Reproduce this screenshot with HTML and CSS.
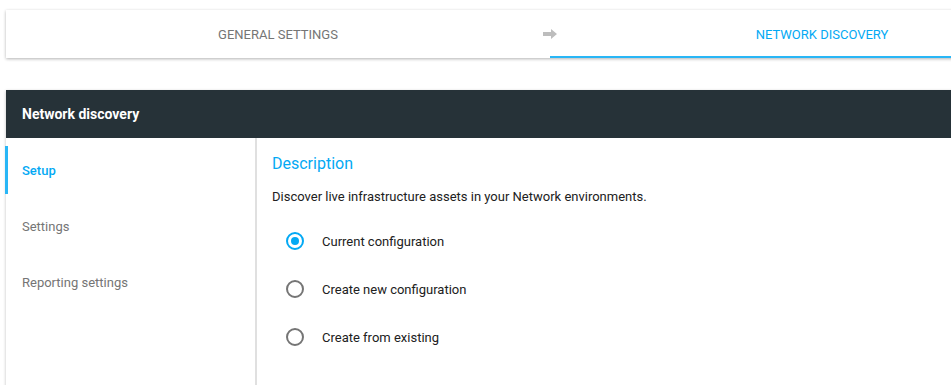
FILE: index.html
```html
<!DOCTYPE html>
<html lang="en">
<head>
    <meta charset="UTF-8">
    <meta name="viewport" content="width=device-width, initial-scale=1.0">
    <title>Network discovery</title>
    <link rel="stylesheet" href="styles.css">
</head>
<body>
    <div class="page">
        <div class="stepper">
            <div class="step">General settings</div>
            <svg class="step-arrow" viewBox="0 0 14 10">
                <path d="M0 3h8V0l6 5-6 5V7H0z"></path>
            </svg>
            <div class="step step-active">Network discovery</div>
        </div>

        <div class="panel">
            <div class="panel-header">Network discovery</div>
            <div class="panel-body">
                <ul class="side-nav">
                    <li class="side-item side-item-active">Setup</li>
                    <li class="side-item">Settings</li>
                    <li class="side-item">Reporting settings</li>
                </ul>
                <div class="content">
                    <h2 class="content-title">Description</h2>
                    <p class="content-text">Discover live infrastructure assets in your Network environments.</p>
                    <div class="radio-group">
                        <label class="radio">
                            <span class="radio-circle radio-checked"></span>
                            Current configuration
                        </label>
                        <label class="radio">
                            <span class="radio-circle"></span>
                            Create new configuration
                        </label>
                        <label class="radio">
                            <span class="radio-circle"></span>
                            Create from existing
                        </label>
                    </div>
                </div>
            </div>
        </div>
    </div>
</body>
</html>
```

FILE: styles.css
```css
body {
    font-family: Roboto, "Liberation Sans", sans-serif;
    background-color: #fff;
    margin: 0px;
    overflow: hidden;
}

.page {
    padding: 10px 0 0 6px;
    width: 1088px;
}

.stepper {
    position: relative;
    display: flex;
    height: 48px;
    background-color: #fff;
    box-shadow: 0px 1px 3px 0px rgba(0, 0, 0, 0.3);
}

.step {
    flex: 1;
    display: flex;
    align-items: center;
    justify-content: center;
    font-size: 13px;
    text-transform: uppercase;
    color: #757575;
    border-bottom: 2px solid transparent;
    padding-top: 2px;
}

.step-active {
    color: #03a9f4;
    border-bottom-color: #29b6f6;
}

.step-arrow {
    position: absolute;
    left: 537px;
    top: 19px;
    width: 14px;
    height: 10px;
    fill: #bdbdbd;
}

.panel {
    margin-top: 32px;
    background-color: #fff;
    box-shadow: 0px 1px 3px 0px rgba(0, 0, 0, 0.25);
}

.panel-header {
    height: 48px;
    display: flex;
    align-items: center;
    padding-left: 16px;
    background-color: #263238;
    color: #fff;
    font-size: 14px;
    font-weight: 700;
}

.panel-body {
    display: flex;
    height: 300px;
}

.side-nav {
    width: 249px;
    margin: 0px;
    padding: 8px 0 0;
    list-style: none;
    border-right: 2px solid #e0e0e0;
    display: flex;
    flex-direction: column;
    gap: 8px;
}

.side-item {
    height: 48px;
    display: flex;
    align-items: center;
    padding-left: 14px;
    font-size: 13px;
    color: #757575;
    border-left: 3px solid transparent;
    margin-left: -1px;
}

.side-item-active {
    color: #03a9f4;
    font-weight: 500;
    border-left-color: #29b6f6;
}

.content {
    padding: 16px 15px;
}

.content-title {
    margin: 0px;
    font-size: 16px;
    font-weight: 400;
    color: #03a9f4;
}

.content-text {
    margin: 16px 0 0;
    font-size: 13px;
    color: #212121;
}

.radio-group {
    display: flex;
    flex-direction: column;
    margin-top: 13px;
    padding-left: 14px;
}

.radio {
    height: 48px;
    display: flex;
    align-items: center;
    gap: 18px;
    font-size: 13px;
    color: #212121;
}

.radio-circle {
    width: 14px;
    height: 14px;
    border: 2px solid #757575;
    border-radius: 50%;
    display: flex;
    align-items: center;
    justify-content: center;
}

.radio-checked {
    border-color: #03a9f4;
}

.radio-checked::after {
    content: "";
    width: 8px;
    height: 8px;
    border-radius: 50%;
    background-color: #03a9f4;
}
```
